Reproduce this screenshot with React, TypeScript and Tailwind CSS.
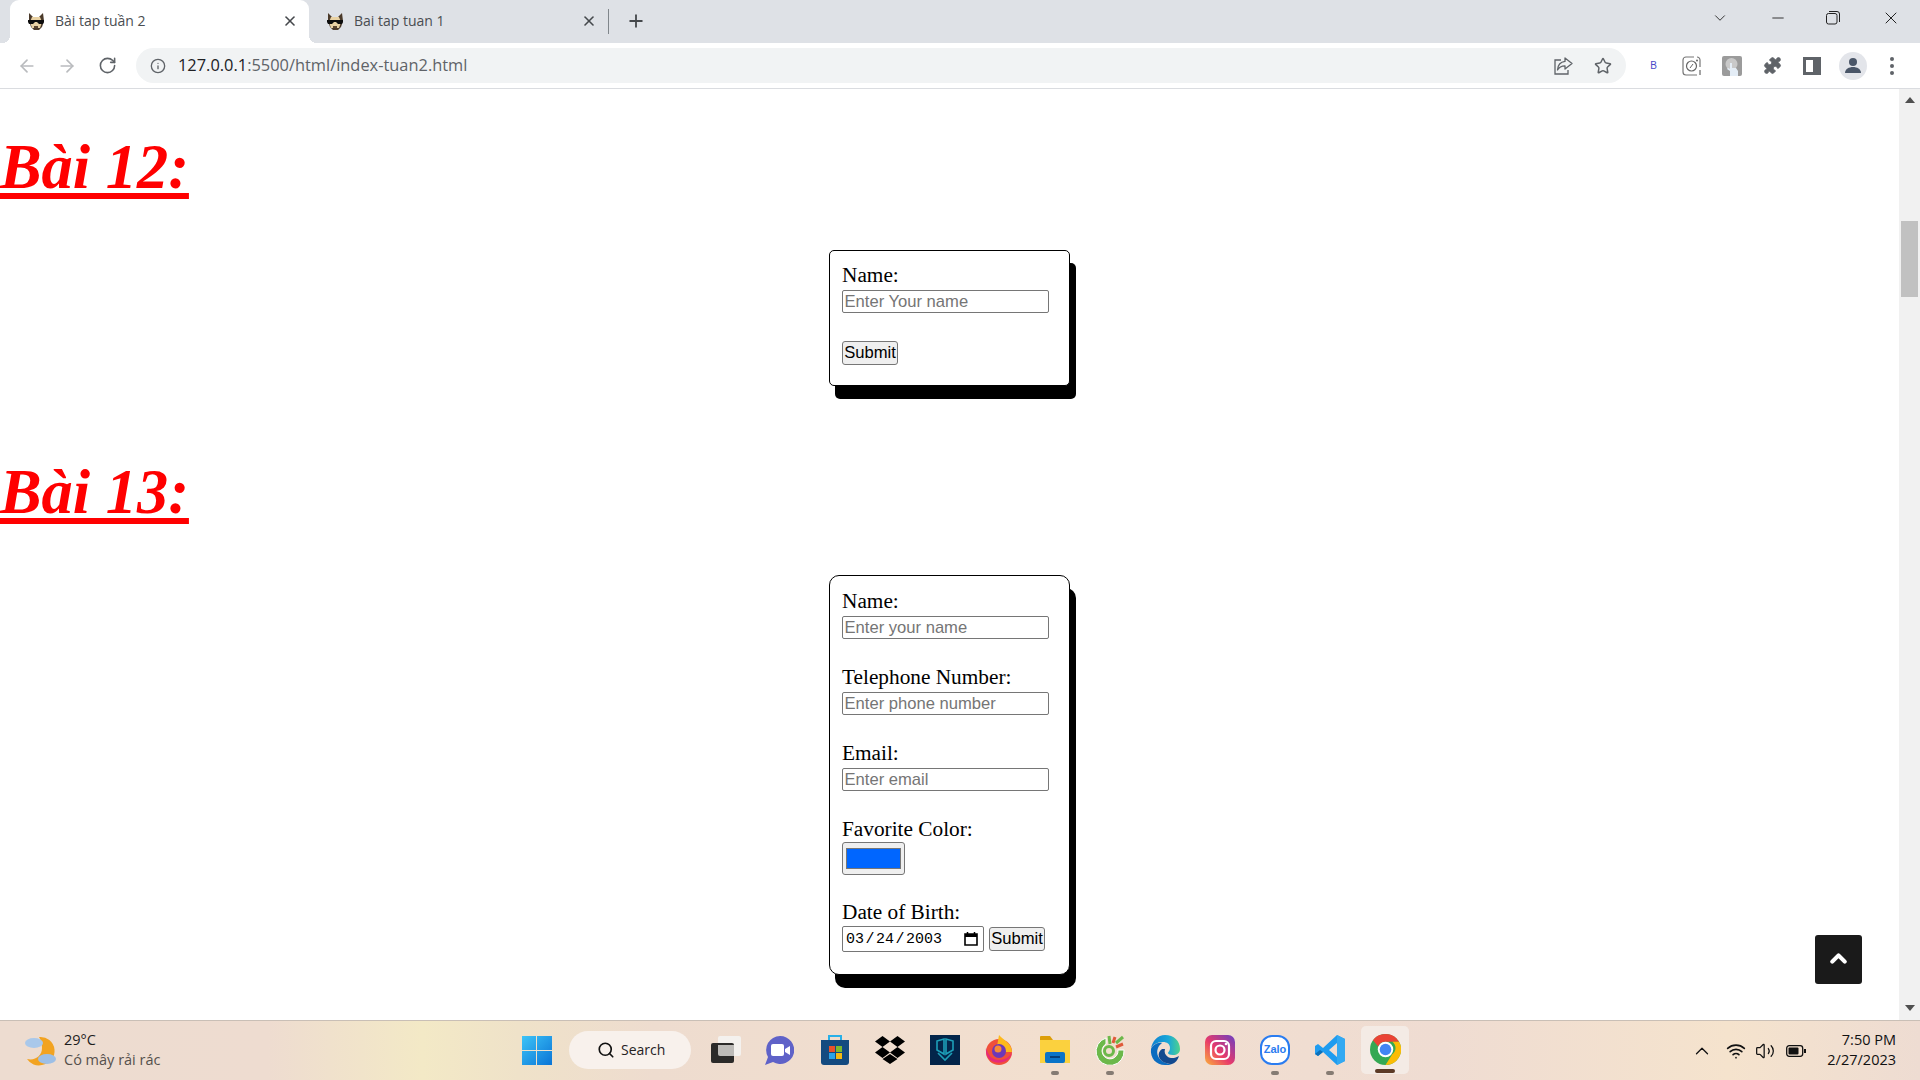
import { ChevronDown, Minus, X, Plus, ArrowLeft, ArrowRight, RotateCw, Info, Star, Puzzle, Search, ChevronUp, Wifi, Volume2 } from "lucide-react";

const serif = "font-['Liberation_Serif','Times_New_Roman',serif]";
const sans = "font-['Liberation_Sans',Arial,sans-serif]";
const ui = "font-['Open_Sans','Noto_Sans',sans-serif]";

function Favicon() {
  return (
    <svg width="18" height="18" viewBox="0 0 18 18" className="shrink-0">
      <path d="M2 1l4 4h6l4-4 1 8-2 6-3 3H7l-3-3-2-6z" fill="#4b3a2a" />
      <path d="M5 5h8l2 5-2 6H5l-2-6z" fill="#e9d2a4" />
      <path d="M1 8h16v2l-1 2h-4l-2-2H8l-2 2H2l-1-2z" fill="#0d0d0d" />
      <path d="M7 14h4v2H7z" fill="#5c4630" />
    </svg>
  );
}

function Tab({ title, active }: { title: string; active?: boolean }) {
  return (
    <div
      className={`relative flex h-[43px] w-[299px] shrink-0 items-center rounded-t-[9px] pr-[11px] pb-[2px] pl-[17px] ${
        active
          ? "bg-white before:absolute before:bottom-0 before:-left-[8px] before:h-[8px] before:w-[8px] before:bg-[radial-gradient(circle_at_0_0,transparent_8px,white_8px)] after:absolute after:-right-[8px] after:bottom-0 after:h-[8px] after:w-[8px] after:bg-[radial-gradient(circle_at_100%_0,transparent_8px,white_8px)]"
          : ""
      }`}
    >
      <Favicon />
      <span className={`ml-[10px] flex-1 text-[14px] text-[#4a4d51] ${ui}`}>{title}</span>
      <X size={16} strokeWidth={2.4} className="text-[#45484c]" />
    </div>
  );
}

function Field({ label, placeholder }: { label: string; placeholder: string }) {
  return (
    <div className="mb-[26px] flex flex-col items-start">
      <label className="h-[27px] text-[21.3px] leading-[24px] text-black">{label}</label>
      <input
        placeholder={placeholder}
        readOnly
        className={`h-[23px] w-[207px] rounded-[2px] border border-[#767676] px-[1.5px] pt-[1px] text-[16.6px] text-black outline-none placeholder:text-[#757575] ${sans}`}
      />
    </div>
  );
}

function SubmitButton() {
  return (
    <button className={`h-[24px] w-[56px] rounded-[3px] border border-[#767676] bg-[#efefef] text-center text-[16.6px] leading-[20px] whitespace-nowrap text-black ${sans}`}>
      Submit
    </button>
  );
}

function Heading({ children }: { children: string }) {
  return (
    <h1 className={`h-[75px] text-[62.4px] leading-[75px] font-bold text-[#ff0000] italic underline decoration-[6px] underline-offset-[5px] ${serif}`}>
      {children}
    </h1>
  );
}

function Card({ children, className }: { children: React.ReactNode; className: string }) {
  return (
    <form className={`mx-auto w-[241px] border border-black bg-white pl-[12px] shadow-[6px_13px_0_0_#000] ${serif} ${className}`}>
      {children}
    </form>
  );
}

function Dot({ offset }: { offset: string }) {
  return <span className={`absolute left-[11px] h-[4px] w-[8px] rounded-full bg-[#857b73] ${offset}`} />;
}

function Taskbar() {
  return (
    <footer className="flex h-[60px] shrink-0 items-center border-t border-[#c9bfb6] bg-[linear-gradient(90deg,#eddcd0_0%,#eedcd0_14%,#f3e9c6_22%,#efe2c9_27%,#eedccf_34%,#f2dfcf_55%,#efdcd2_75%,#f5e3cd_90%,#eedcd2_100%)]">
      <div className="flex w-[500px] items-center pl-[24px]">
        <svg width="33" height="34" viewBox="0 0 33 34">
          <path d="M15 3a14 14 0 0 1 3 28 14 14 0 0 1-15-6c8 2 15-3 15-11 0-4-1-8-3-11z" fill="#f2a321" />
          <ellipse cx="10" cy="9" rx="9" ry="5" fill="#a9c8ea" />
          <ellipse cx="23" cy="25" rx="9" ry="5" fill="#9dbfe6" />
        </svg>
        <div className={`ml-[7px] -translate-y-px text-[14.5px] leading-[20px] ${ui}`}>
          <div className="text-[#1d1d1d]">29°C</div>
          <div className="text-[#55504c]">Có mây rải rác</div>
        </div>
      </div>
      <div className="mb-[2px] flex items-center">
        <svg width="30" height="30" viewBox="0 0 30 30" className="ml-[22px]">
          <defs>
            <linearGradient id="win" x1="0" y1="0" x2="1" y2="1">
              <stop offset="0" stopColor="#3dc4f7" />
              <stop offset="1" stopColor="#0a74d6" />
            </linearGradient>
          </defs>
          <path d="M0 1h14v14H0zM15 1h15v14H15zM0 16h14v14H0zM15 16h15v14H15z" fill="url(#win)" />
        </svg>
        <div className={`ml-[17px] flex h-[38px] w-[122px] items-center rounded-full bg-[#f8f1ec] pl-[28px] text-[14px] text-[#26221f] ${ui}`}>
          <Search size={18} strokeWidth={2.2} className="mr-[6px] text-[#111]" />
          Search
        </div>
        <svg width="30" height="28" viewBox="0 0 30 28" className="ml-[20px]">
          <rect x="7" y="0" width="23" height="20" rx="2" fill="#f4f1ee" />
          <rect x="0" y="7" width="23" height="20" rx="2" fill="#2b2a29" />
          <path d="M7 9h16v11H9a2 2 0 0 1-2-2z" fill="#bdbbb8" />
        </svg>
        <svg width="30" height="30" viewBox="0 0 30 30" className="ml-[23px]">
          <path d="M16 1a14 14 0 1 1-7 26l-8 3 3-8A14 14 0 0 1 16 1z" fill="#5f62c8" />
          <rect x="7" y="9" width="13" height="12" rx="2" fill="#fff" />
          <path d="M21 14l5-3v9l-5-3z" fill="#fff" />
        </svg>
        <svg width="30" height="30" viewBox="0 0 30 30" className="ml-[26px]">
          <path d="M9 6V1h12v5" fill="none" stroke="#28b0e8" strokeWidth="2" />
          <path d="M1 5h28v22a3 3 0 0 1-3 3H4a3 3 0 0 1-3-3z" fill="#134a80" />
          <path d="M9 11h6v6H9z" fill="#e8512a" />
          <path d="M16 11h6v6h-6z" fill="#7db82d" />
          <path d="M9 18h6v6H9z" fill="#2aa3e8" />
          <path d="M16 18h6v6h-6z" fill="#f5b912" />
        </svg>
        <svg width="30" height="28" viewBox="0 0 30 28" className="ml-[25px]">
          <path d="M7.5 0L15 5.5 7.5 11 0 5.5zM22.5 0L30 5.5 22.5 11 15 5.5zM7.5 11L15 16.5 7.5 22 0 16.5zM22.5 11L30 16.5 22.5 22 15 16.5zM15 18l7.5 5L15 28l-7.5-5z" fill="#000" />
        </svg>
        <svg width="30" height="30" viewBox="0 0 30 30" className="ml-[25px]">
          <rect width="30" height="30" fill="#03254a" />
          <path d="M7 6l7-2v15l-7-4zM23 6l-7-2v15l7-4z" fill="none" stroke="#1d9fb8" strokeWidth="1.600" />
          <path d="M8 18l7 7 7-7" fill="none" stroke="#1d9fb8" strokeWidth="1.600" />
        </svg>
        <svg width="30" height="30" viewBox="0 0 30 30" className="ml-[24px]">
          <circle cx="15" cy="17" r="13" fill="#f0503a" />
          <path d="M15 0c4 5 13 8 13 17H12z" fill="#fdb91c" />
          <path d="M2 13c2 7 6 12 13 12 6 0 11-3 13-8-2 15-28 15-26-4z" fill="#e5297a" />
          <circle cx="15" cy="16" r="7" fill="#6e38b8" />
          <circle cx="14" cy="14" r="3.500" fill="#f88a36" />
        </svg>
      </div>
      <div className="mb-[2px] flex items-center">
        <div className="relative ml-[26px]">
          <svg width="30" height="27" viewBox="0 0 30 27" className="block">
            <path d="M0 1a1 1 0 0 1 1-1h9l3 4H0z" fill="#dd9e08" />
            <path d="M0 4h30v23H0z" fill="#fbd13e" />
            <rect x="5" y="16" width="20" height="11" rx="2" fill="#0a74c8" />
            <rect x="10" y="20" width="10" height="2" fill="#053f7a" />
          </svg>
          <Dot offset="-bottom-[12px]" />
        </div>
        <div className="relative ml-[25px]">
          <svg width="30" height="30" viewBox="0 0 30 30" className="block">
            <path d="M11 3a14 14 0 1 0 18 12h-6a8 8 0 1 1-12-6z" fill="#6cb84a" stroke="#fff" strokeWidth="1" />
            <circle cx="14" cy="16" r="4.500" fill="none" stroke="#6cb84a" strokeWidth="3" />
            <path d="M14 1l1 8" stroke="#6cb84a" strokeWidth="3" />
            <path d="M20 2l-2 6" stroke="#e05a3a" strokeWidth="3" />
            <path d="M28 2l-7 6" stroke="#6cb84a" strokeWidth="3" />
            <path d="M21 12l7-3" stroke="#e05a3a" strokeWidth="3" />
          </svg>
          <Dot offset="-bottom-[10px]" />
        </div>
        <svg width="30" height="30" viewBox="0 0 30 30" className="ml-[25px]">
          <defs>
            <linearGradient id="edge" x1="0" y1="0.500" x2="1" y2="0.500">
              <stop offset="0" stopColor="#0f7fd0" />
              <stop offset="0.6" stopColor="#1aa8d8" />
              <stop offset="1" stopColor="#4fd28c" />
            </linearGradient>
          </defs>
          <path d="M1 14C2 6 8 0 15 0c9 0 15 6 15 14 0 4-3 6-7 6-3 0-5-1-5-2 0-1 2-2 2-5 0-4-3-6-7-6-6 0-11 3-12 7z" fill="url(#edge)" />
          <path d="M1 14c1-3 6-7 11-6-4 3-6 8-4 13 2 5 8 8 14 8-2 1-4 1-7 1-9 0-15-7-14-16z" fill="#0b6cc0" />
          <path d="M12 14c-3 2-4 5-3 8 2 5 8 7 13 7 3-1 6-4 7-8-3 2-8 3-11 1-3-2-4-5-3-8z" fill="#12498f" />
        </svg>
        <svg width="30" height="30" viewBox="0 0 30 30" className="ml-[25px]">
          <defs>
            <linearGradient id="ig" x1="0" y1="1" x2="1" y2="0">
              <stop offset="0" stopColor="#fbb03b" />
              <stop offset="0.45" stopColor="#e83a6a" />
              <stop offset="1" stopColor="#6a3fc4" />
            </linearGradient>
          </defs>
          <rect width="30" height="30" rx="7" fill="url(#ig)" />
          <rect x="6" y="6" width="18" height="18" rx="5" fill="none" stroke="#fff" strokeWidth="2.200" />
          <circle cx="15" cy="15" r="4.500" fill="none" stroke="#fff" strokeWidth="2.200" />
          <circle cx="21" cy="9" r="1.300" fill="#fff" />
        </svg>
        <div className="relative ml-[25px]">
          <div className="flex h-[30px] w-[30px] items-center justify-center rounded-[12px] border-2 border-[#2a7cf0] bg-white text-[11px] font-bold text-[#2a7cf0]">
            <span className={sans}>Zalo</span>
          </div>
          <Dot offset="-bottom-[10px]" />
        </div>
        <div className="relative ml-[25px]">
          <svg width="30" height="30" viewBox="0 0 30 30" className="block">
            <path d="M22 0l8 4v22l-8 4L8 17l-5 4-3-2v-8l3-2 5 4zM22 8l-8 7 8 7z" fill="#1f9cf0" />
            <path d="M22 0l8 4v22l-8 4z" fill="#33a9f2" />
            <path d="M8 17l-5 4-3-2 5-4z" fill="#0d6fb8" />
          </svg>
          <Dot offset="-bottom-[10px]" />
        </div>
        <div className="relative ml-[16px] flex h-[48px] w-[48px] items-center justify-center rounded-[5px] bg-[#f4ebe5]">
          <svg width="31" height="31" viewBox="0 0 32 32">
            <circle cx="16" cy="16" r="16" fill="#34a853" />
            <path d="M16 0a16 16 0 0 1 14 8H16a8 8 0 0 0-7.500 5L3 6.500A16 16 0 0 1 16 0z" fill="#ea4335" />
            <path d="M30 8a16 16 0 0 1-14 24l7-11a8 8 0 0 0 0-13z" fill="#fbbc05" />
            <circle cx="16" cy="16" r="8" fill="#fff" />
            <circle cx="16" cy="16" r="6" fill="#4285f4" />
          </svg>
          <span className="absolute bottom-[1px] left-[14px] h-[4px] w-[20px] rounded-full bg-[#5c3a26]" />
        </div>
      </div>
      <div className={`ml-auto flex items-center text-[#111] ${ui}`}>
        <ChevronUp size={22} strokeWidth={1.4} />
        <Wifi size={20} strokeWidth={2} className="ml-[13px]" />
        <Volume2 size={20} strokeWidth={1.5} className="ml-[9px]" />
        <svg width="20" height="12" viewBox="0 0 20 12" className="ml-[11px]">
          <rect x="0.7" y="0.7" width="16" height="10.6" rx="2.500" fill="none" stroke="#111" strokeWidth="1.300" />
          <rect x="2.500" y="2.500" width="10" height="7" rx="1" fill="#111" />
          <rect x="18" y="4" width="2" height="4" fill="#111" />
        </svg>
        <div className="mr-[24px] ml-[21px] -translate-y-px text-right text-[14.5px] leading-[20px]">
          <div>7:50 PM</div>
          <div>2/27/2023</div>
        </div>
      </div>
    </footer>
  );
}

export default function App() {
  return (
    <div className="flex h-screen w-full flex-col overflow-hidden bg-white">
      {/* tab strip */}
      <header className="flex h-[43px] shrink-0 items-center bg-[#dee1e6] pl-[10px]">
        <Tab title="Bài tap tuần 2" active />
        <Tab title="Bai tap tuan 1" />
        <div className="h-[25px] w-px bg-[#80868b]" />
        <Plus size={20} strokeWidth={2.2} className="mb-[2px] ml-[17px] text-[#45484c]" />
        <div className="mb-[7px] ml-auto flex items-center text-[#222]">
          <ChevronDown size={18} strokeWidth={1.2} />
          <Minus size={18} strokeWidth={1.2} className="ml-[40px]" />
          <svg width="14" height="14" viewBox="0 0 14 14" className="ml-[39px]">
            <rect x="0.5" y="2.500" width="10.500" height="10.500" rx="2" fill="none" stroke="#222" />
            <path d="M3 .5h8a2.500 2.500 0 0 1 2.500 2.500v8" fill="none" stroke="#222" />
          </svg>
          <X size={20} strokeWidth={1.2} className="mr-[19px] ml-[41px]" />
        </div>
      </header>

      {/* toolbar */}
      <div className="flex h-[46px] shrink-0 items-center border-b border-[#dadce0] bg-white">
        <ArrowLeft size={20} strokeWidth={2} className="ml-[17px] text-[#b9bbbe]" />
        <ArrowRight size={20} strokeWidth={2} className="ml-[20px] text-[#b9bbbe]" />
        <RotateCw size={19} strokeWidth={2} className="ml-[21px] text-[#5f6368]" />
        <div className="ml-[19px] flex h-[35px] flex-1 items-center rounded-full bg-[#f1f3f4] pl-[14px]">
          <Info size={16} strokeWidth={2} className="text-[#5f6368]" />
          <span className={`ml-[12px] text-[16.4px] text-[#202124] ${ui}`}>
            127.0.0.1<span className="text-[#5f6368]">:5500/html/index-tuan2.html</span>
          </span>
          <svg width="20" height="20" viewBox="0 0 20 20" className="ml-auto">
            <path d="M8 4H2v14h13v-4" fill="none" stroke="#5f6368" strokeWidth="1.300" />
            <path d="M12 2l7 5.500-7 5.500V9.800C8 9.800 6 11 4.500 14c.3-5 3-8 7.500-8.600z" fill="none" stroke="#5f6368" strokeWidth="1.300" strokeLinejoin="round" />
          </svg>
          <Star size={18} strokeWidth={2} className="mr-[14px] ml-[21px] text-[#5f6368]" />
        </div>
        <span className={`ml-[24px] text-[10px] text-[#4a4ac8] ${sans}`}>B</span>
        <svg width="20" height="20" viewBox="0 0 20 20" className="ml-[25px]">
          <path d="M12 1H4a3 3 0 0 0-3 3v12a3 3 0 0 0 3 3h11M18 11V4a3 3 0 0 0-3-3" fill="none" stroke="#777" strokeWidth="1.200" />
          <circle cx="9.500" cy="10" r="5" fill="none" stroke="#666" strokeWidth="1.200" />
          <path d="M8 12l3-4" stroke="#666" />
          <circle cx="15" cy="4.500" r="1" fill="#666" />
          <path d="M18 14v5" stroke="#666" strokeWidth="1.200" />
        </svg>
        <svg width="20" height="20" viewBox="0 0 20 20" className="ml-[20px]">
          <rect width="20" height="20" rx="2" fill="#9b9b9b" />
          <circle cx="9.500" cy="8" r="6" fill="#c9c9c9" />
          <path d="M8 20v-5l-3-2 1-1 2 1V7h2v5h4l2 3v5z" fill="#e4edf6" />
        </svg>
        <Puzzle size={19} fill="#5f6368" strokeWidth={1} className="ml-[21px] text-[#5f6368]" />
        <div className="ml-[21px] flex h-[18px] w-[18px] border-[3px] border-[#5f6368] bg-white">
          <div className="ml-auto h-full w-[5px] bg-[#5f6368]" />
        </div>
        <div className="ml-[18px] flex h-[28px] w-[28px] items-center justify-center rounded-full bg-[#e3e5ea]">
          <svg width="18" height="18" viewBox="0 0 18 18">
            <circle cx="9" cy="5" r="4" fill="#4a5668" />
            <path d="M1 16c0-4 4-6 8-6s8 2 8 6z" fill="#4a5668" />
          </svg>
        </div>
        <div className="mr-[26px] ml-[23px] flex flex-col gap-[3px]">
          <i className="h-[4px] w-[4px] rounded-full bg-[#5f6368]" />
          <i className="h-[4px] w-[4px] rounded-full bg-[#5f6368]" />
          <i className="h-[4px] w-[4px] rounded-full bg-[#5f6368]" />
        </div>
      </div>

      {/* page */}
      <div className="relative flex min-h-0 flex-1">
        <main className="min-w-0 flex-1 overflow-hidden pt-[40px]">
          <Heading>Bài 12:</Heading>
          <Card className="mt-[46px] h-[136px] rounded-[5px] pt-[12px]">
            <Field label="Name:" placeholder="Enter Your name" />
            <div className="mt-[28px]">
              <SubmitButton />
            </div>
          </Card>
          <div className="mt-[68px]">
            <Heading>Bài 13:</Heading>
          </div>
          <Card className="mt-[46px] h-[400px] rounded-[10px] pt-[13px]">
            <Field label="Name:" placeholder="Enter your name" />
            <Field label="Telephone Number:" placeholder="Enter phone number" />
            <Field label="Email:" placeholder="Enter email" />
            <div className="mb-[26px] flex flex-col items-start">
              <label className="h-[25px] text-[21.3px] leading-[24px]">Favorite Color:</label>
              <div className="flex h-[33px] w-[63px] items-center justify-center rounded-[3px] border border-[#767676] bg-[#efefef]">
                <div className="h-[21px] w-[55px] border border-[#767676] bg-[#0066ff]" />
              </div>
            </div>
            <label className="block h-[25px] text-[21.3px] leading-[22px]">Date of Birth:</label>
            <div className="flex items-center">
              <div className="flex h-[26px] w-[142px] items-center rounded-[2px] border border-[#767676] pr-[4px] pl-[3px] text-black">
                <span className="flex pt-[2px] font-['Liberation_Mono',monospace] text-[15px] whitespace-nowrap">
                  <span>03</span>
                  <span className="mx-[1.5px]">/</span>
                  <span>24</span>
                  <span className="mx-[1.5px]">/</span>
                  <span>2003</span>
                </span>
                <svg width="16" height="16" viewBox="0 0 16 16" className="ml-auto">
                  <path d="M2 3h12v11H2z" fill="none" stroke="#000" strokeWidth="1.600" />
                  <path d="M2 3h12v3H2z" fill="#000" />
                  <path d="M4.500 1v3M11.500 1v3" stroke="#000" strokeWidth="1.500" />
                </svg>
              </div>
              <div className="ml-[5px] flex">
                <SubmitButton />
              </div>
            </div>
          </Card>
        </main>

        {/* scrollbar */}
        <aside className="relative flex w-[21px] shrink-0 flex-col items-center bg-[#f1f1f1]">
          <svg width="10" height="6" viewBox="0 0 10 6" className="mt-[8px]">
            <path d="M5 0l5 6H0z" fill="#505050" />
          </svg>
          <div className="mt-[118px] h-[76px] w-[17px] bg-[#c1c1c1]" />
          <svg width="10" height="6" viewBox="0 0 10 6" className="mt-auto mb-[9px]">
            <path d="M5 6l5-6H0z" fill="#505050" />
          </svg>
        </aside>

        <button className="absolute right-[58px] bottom-[36px] flex h-[49px] w-[47px] items-center justify-center rounded-[3px] bg-[#1a1a1a]">
          <ChevronUp size={25} strokeWidth={4} className="mb-[2px] text-white" />
        </button>
      </div>

      <Taskbar />
    </div>
  );
}
